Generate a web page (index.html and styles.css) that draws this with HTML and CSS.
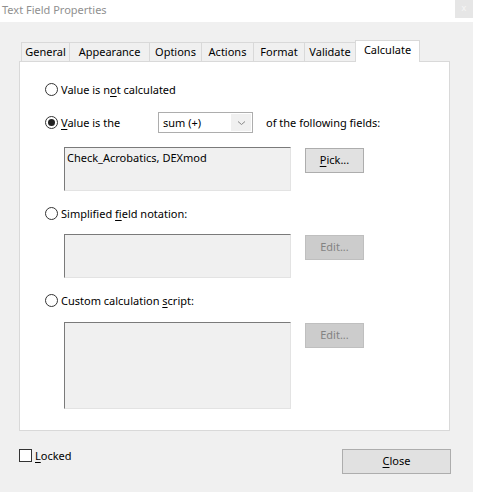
FILE: index.html
```html
<!DOCTYPE html>
<html>
<head>
<meta charset="utf-8">
<link rel="stylesheet" href="styles.css">
</head>
<body>
<div class="titlebar">
  <span class="title">Text Field Properties</span>
  <span class="xbtn">x</span>
</div>
<div class="dialog">
  <div class="tabs">
    <div class="tab t1">General</div>
    <div class="tab t2">Appearance</div>
    <div class="tab t3">Options</div>
    <div class="tab t4">Actions</div>
    <div class="tab t5">Format</div>
    <div class="tab t6">Validate</div>
    <div class="tab sel">Calculate</div>
  </div>
  <div class="panel">
    <div class="row r1"><span class="radio"></span><span class="lbl">Value is n<u>o</u>t calculated</span></div>
    <div class="row r2">
      <span class="radio on"></span><span class="lbl w-val"><u>V</u>alue is the</span>
      <div class="select"><span class="sel-text">sum (+)</span><span class="sel-arrow"><svg width="9" height="6" viewBox="0 0 9 6"><path d="M1 1.5 L4.5 4.5 L8 1.5" fill="none" stroke="#888" stroke-width="1"/></svg></span></div>
      <span class="lbl of">of the following fields:</span>
    </div>
    <div class="boxrow b1">
      <div class="box h44"><span class="boxtext">Check_Acrobatics, DEXmod</span></div>
      <div class="btn"><u>P</u>ick...</div>
    </div>
    <div class="row r3"><span class="radio"></span><span class="lbl">Simplified <u>f</u>ield notation:</span></div>
    <div class="boxrow b2">
      <div class="box h44"></div>
      <div class="btn dis">Edit...</div>
    </div>
    <div class="row r4"><span class="radio"></span><span class="lbl">Custom calculation <u>s</u>cript:</span></div>
    <div class="boxrow b3">
      <div class="box h87"></div>
      <div class="btn dis">Edit...</div>
    </div>
  </div>
  <div class="footer">
    <div class="locked"><span class="check"></span><span class="lbl"><u>L</u>ocked</span></div>
    <div class="btn close"><u>C</u>lose</div>
  </div>
</div>
</body>
</html>
```
FILE: styles.css
```css
* { box-sizing: border-box; }
html, body { margin: 0; padding: 0; background: #fff; }
body {
  width: 481px;
  height: 492px;
  overflow: hidden;
  font-family: "Noto Sans", "Open Sans", sans-serif;
  font-size: 11px;
  color: #000;
}
u { text-decoration: underline; text-underline-offset: 2px; }

.titlebar {
  height: 22px;
  display: flex;
  justify-content: space-between;
  align-items: flex-start;
  padding-left: 2px;
  padding-right: 8px;
}
.title {
  color: #909090;
  line-height: 20px;
}
.xbtn {
  width: 18px;
  height: 18px;
  background: #e6e6e6;
  color: #f6f6f6;
  font-size: 9px;
  text-align: center;
  line-height: 16px;
}

.dialog {
  width: 473px;
  height: 470px;
  background: #f0f0f0;
  padding: 18px 0 0 19px;
}

.tabs {
  display: flex;
  align-items: flex-end;
  margin-left: 2px;
  height: 21px;
  position: relative;
  z-index: 1;
}
.tab {
  height: 19px;
  border: 1px solid #d9d9d9;
  border-bottom: none;
  border-right: none;
  background: #f0f0f0;
  line-height: 18px;
  text-align: center;
  white-space: nowrap;
}
.t1 { width: 48px; }
.t2 { width: 80px; }
.t3 { width: 52px; }
.t4 { width: 52px; }
.t5 { width: 51px; }
.t6 { width: 51px; }
.tab.sel {
  width: 65px;
  height: 22px;
  margin-bottom: -1px;
  background: #fff;
  border-right: 1px solid #d9d9d9;
  line-height: 18px;
}

.panel {
  width: 431px;
  height: 370px;
  background: #fff;
  border: 1px solid #d9d9d9;
  padding: 19px 0 0 25px;
}

.row {
  display: flex;
  align-items: center;
  height: 16px;
}
.r2 { height: 21px; margin-top: 15px; }
.r3 { margin-top: 14px; }
.r4 { margin-top: 14px; }

.radio {
  width: 13px;
  height: 13px;
  border: 1px solid #333;
  border-radius: 50%;
  background: #fff;
  margin-right: 3px;
  display: flex;
  align-items: center;
  justify-content: center;
  flex: none;
}
.radio.on::after {
  content: "";
  width: 7px;
  height: 7px;
  border-radius: 50%;
  background: #222;
}
.lbl { white-space: nowrap; }
.w-val { width: 97px; }

.select {
  width: 95px;
  height: 21px;
  border: 1px solid #adadad;
  background: #fff;
  display: flex;
  align-items: stretch;
}
.sel-text {
  flex: 1;
  padding: 1px 0 0 4px;
  line-height: 18px;
  background: #fff;
}
.sel-arrow {
  width: 21px;
  background: #f0f0f0;
  display: flex;
  align-items: center;
  justify-content: center;
  border-top: 1px solid #fff;
  border-bottom: 1px solid #fff;
  border-right: 1px solid #fff;
}
.of { margin-left: 13px; }

.boxrow {
  display: flex;
  align-items: flex-start;
  margin-left: 19px;
}
.b1 { margin-top: 14px; }
.b2 { margin-top: 13px; }
.b3 { margin-top: 14px; }

.box {
  width: 227px;
  background: #f0f0f0;
  border-top: 1px solid #7a7a7a;
  border-left: 1px solid #7a7a7a;
  border-right: 1px solid #e3e3e3;
  border-bottom: 1px solid #e3e3e3;
}
.h44 { height: 44px; }
.h87 { height: 87px; }
.boxtext {
  display: block;
  padding: 2px 0 0 2px;
  line-height: 16px;
}

.btn {
  width: 59px;
  height: 25px;
  margin-left: 14px;
  margin-top: 1px;
  background: #e1e1e1;
  border: 1px solid #adadad;
  text-align: center;
  line-height: 22px;
}
.btn.dis {
  background: #cccccc;
  border-color: #bfbfbf;
  color: #838383;
}

.footer {
  display: flex;
  justify-content: space-between;
  align-items: flex-start;
  margin-top: 18px;
  width: 432px;
}
.locked {
  display: flex;
  align-items: center;
  margin-top: -1px;
}
.check {
  width: 13px;
  height: 13px;
  border: 1px solid #333;
  background: #fff;
  margin-right: 3px;
}
.btn.close {
  width: 109px;
  height: 25px;
  margin: 0;
}
```
